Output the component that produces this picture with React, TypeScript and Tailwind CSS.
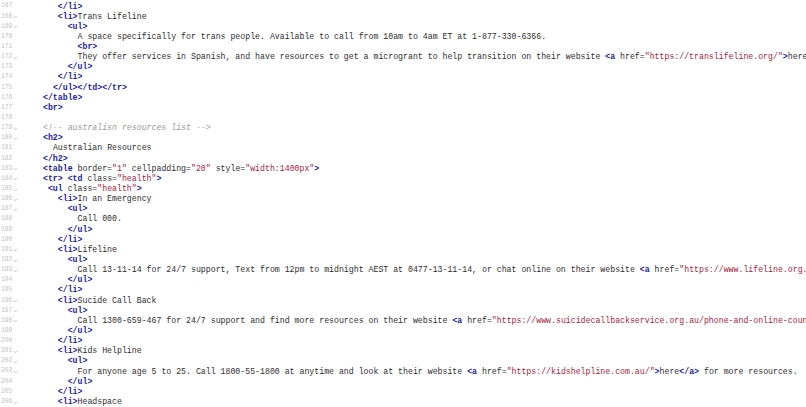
import React from 'react';

type Tok = { t: string; k: 'txt' | 'tag' | 'str' | 'com' };

const lines: { n: number; fold?: boolean; indent: number; code: string }[] = [
  { n: 167, indent: 3, code: '</li>' },
  { n: 168, fold: true, indent: 3, code: '<li>Trans Lifeline' },
  { n: 169, fold: true, indent: 5, code: '<ul>' },
  { n: 170, indent: 7, code: 'A space specifically for trans people. Available to call from 10am to 4am ET at 1-877-330-6366.' },
  { n: 171, indent: 7, code: '<br>' },
  {
    n: 172,
    fold: true,
    indent: 7,
    code: 'They offer services in Spanish, and have resources to get a microgrant to help transition on their website <a href="https://translifeline.org/">here</a>.',
  },
  { n: 173, indent: 5, code: '</ul>' },
  { n: 174, indent: 3, code: '</li>' },
  { n: 175, indent: 2, code: '</ul></td></tr>' },
  { n: 176, indent: 0, code: '</table>' },
  { n: 177, indent: 0, code: '<br>' },
  { n: 178, indent: 0, code: '' },
  { n: 179, fold: true, indent: 0, code: '<!-- australisn resources list -->' },
  { n: 180, fold: true, indent: 0, code: '<h2>' },
  { n: 181, indent: 2, code: 'Australian Resources' },
  { n: 182, indent: 0, code: '</h2>' },
  { n: 183, fold: true, indent: 0, code: '<table border="1" cellpadding="20" style="width:1400px">' },
  { n: 184, fold: true, indent: 0, code: '<tr> <td class="health">' },
  { n: 185, fold: true, indent: 1, code: '<ul class="health">' },
  { n: 186, fold: true, indent: 3, code: '<li>In an Emergency' },
  { n: 187, fold: true, indent: 5, code: '<ul>' },
  { n: 188, indent: 7, code: 'Call 000.' },
  { n: 189, indent: 5, code: '</ul>' },
  { n: 190, indent: 3, code: '</li>' },
  { n: 191, fold: true, indent: 3, code: '<li>Lifeline' },
  { n: 192, fold: true, indent: 5, code: '<ul>' },
  {
    n: 193,
    fold: true,
    indent: 7,
    code: 'Call 13-11-14 for 24/7 support, Text from 12pm to midnight AEST at 0477-13-11-14, or chat online on their website <a href="https://www.lifeline.org.au/">here</a>.',
  },
  { n: 194, indent: 5, code: '</ul>' },
  { n: 195, indent: 3, code: '</li>' },
  { n: 196, fold: true, indent: 3, code: '<li>Sucide Call Back' },
  { n: 197, fold: true, indent: 5, code: '<ul>' },
  {
    n: 198,
    fold: true,
    indent: 7,
    code: 'Call 1300-659-467 for 24/7 support and find more resources on their website <a href="https://www.suicidecallbackservice.org.au/phone-and-online-counselling/">here</a>.',
  },
  { n: 199, indent: 5, code: '</ul>' },
  { n: 200, indent: 3, code: '</li>' },
  { n: 201, fold: true, indent: 3, code: '<li>Kids Helpline' },
  { n: 202, fold: true, indent: 5, code: '<ul>' },
  {
    n: 203,
    fold: true,
    indent: 7,
    code: 'For anyone age 5 to 25. Call 1800-55-1800 at anytime and look at their website <a href="https://kidshelpline.com.au/">here</a> for more resources.',
  },
  { n: 204, indent: 5, code: '</ul>' },
  { n: 205, indent: 3, code: '</li>' },
  { n: 206, fold: true, indent: 3, code: '<li>Headspace' },
];

// tiny html highlighter, good enough for these lines
const tokenize = (src: string): Tok[] => {
  const out: Tok[] = [];
  let i = 0;
  while (i < src.length) {
    if (src.startsWith('<!--', i)) {
      const end = src.indexOf('-->', i);
      const stop = end === -1 ? src.length : end + 3;
      out.push({ t: src.slice(i, stop), k: 'com' });
      i = stop;
    } else if (src[i] === '<') {
      let j = i + 1;
      if (src[j] === '/') j++;
      while (j < src.length && /[a-zA-Z0-9]/.test(src[j])) j++;
      out.push({ t: src.slice(i, j), k: 'tag' });
      i = j;
      while (i < src.length && src[i] !== '>') {
        if (src[i] === '"') {
          const end = src.indexOf('"', i + 1);
          out.push({ t: src.slice(i, end + 1), k: 'str' });
          i = end + 1;
        } else {
          let k = i;
          while (k < src.length && src[k] !== '"' && src[k] !== '>') k++;
          out.push({ t: src.slice(i, k), k: 'txt' });
          i = k;
        }
      }
      if (src[i] === '>') {
        out.push({ t: '>', k: 'tag' });
        i++;
      }
    } else {
      let k = i;
      while (k < src.length && src[k] !== '<') k++;
      out.push({ t: src.slice(i, k), k: 'txt' });
      i = k;
    }
  }
  return out;
};

const tokClass: Record<Tok['k'], string> = {
  txt: 'text-[#2e2e2e]',
  tag: 'text-[#1b1ba3] font-bold',
  str: 'text-[#a8233b]',
  com: 'text-[#9a9a9a] italic',
};

const Fold: React.FC = () => (
  <svg width="5" height="4" viewBox="0 0 5 4" className="ml-[1px] mt-[1px]">
    <path d="M0.8 1 L2.5 2.8 L4.2 1" fill="none" stroke="#b5b5b5" strokeWidth="0.8" />
  </svg>
);

const App: React.FC = () => {
  return (
    <div className="w-[806px] h-[407px] overflow-hidden bg-white pt-[1.5px]">
      {lines.map((line) => (
        <div key={line.n} className="flex h-[10.15px] items-center">
          <div className="w-[43px] shrink-0 flex items-center pl-[1px] font-['Liberation_Mono',monospace] text-[6.3px] leading-none text-[#c2c2c2]">
            <span>{line.n}</span>
            {line.fold && <Fold />}
          </div>
          <div className="whitespace-pre font-['Liberation_Mono',monospace] text-[8.22px] leading-[10.15px]">
            {' '.repeat(line.indent)}
            {tokenize(line.code).map((tok, idx) => (
              <span key={idx} className={tokClass[tok.k]}>
                {tok.t}
              </span>
            ))}
          </div>
        </div>
      ))}
    </div>
  );
};

export default App;
